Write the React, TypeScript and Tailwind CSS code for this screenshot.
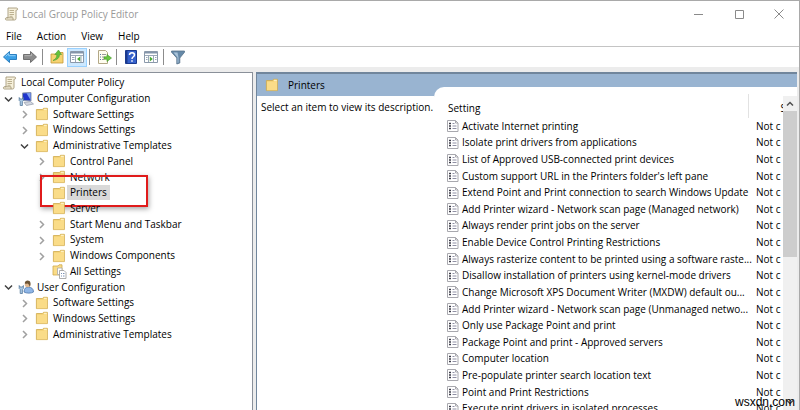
import { useState } from 'react';
import type { ReactNode } from 'react';

interface TreeNode {
  label: string;
  depth: 0 | 1 | 2 | 3;
  icon: ReactNode;
  state?: 'open' | 'closed';
}

function Folder() {
  return (
    <svg className="h-4 w-4 shrink-0" viewBox="0 0 16 16">
      <path d="M2.400 3.500h6.100l1-1.200h3.900v11.300h-11z" fill="#f5d478" stroke="#cfa94c" strokeWidth="0.800" />
      <path d="M3 5h6.500l1-1.300H13v9.500H3z" fill="#fadc88" />
      <path d="M10 2.800h2.800v1H10z" fill="#fff6d4" />
    </svg>
  );
}

function Scroll() {
  return (
    <svg className="h-4 w-4 shrink-0" viewBox="0 0 16 16">
      <path d="M4 2h8.500c1.500 0 1.500 2.200 0 2.200H12v8c0 1.300-.6 1.800-1.500 1.800H2.500c-1.500 0-1.500-2.200 0-2.200H4z" fill="#f7f1dc" stroke="#a59a7c" strokeWidth="0.900" />
      <path d="M2.500 11.800h6.500v2.200" fill="none" stroke="#a59a7c" strokeWidth="0.900" />
      <path d="M5.500 4.500h4.500M5.500 6.500h4.500M5.500 8.500h4.500M5.500 10.300h3" stroke="#b4a988" strokeWidth="0.900" />
    </svg>
  );
}

function ComputerIcon() {
  return (
    <svg className="h-4 w-4 shrink-0" viewBox="0 0 16 16">
      <path d="M4.500 2 13 1.500V10l-8.500-.5z" fill="#1f35cc" stroke="#8c98ac" strokeWidth="1" />
      <path d="m8.500 2.300 4-.3v7z" fill="#7fa0f0" />
      <path d="M6 11.500 12.500 10.500l3 2.500-7 1.500z" fill="#d3d7e0" stroke="#8f98a8" strokeWidth="0.700" />
      <path d="M1.200 6.500v3l1 1v4h2.200v-4l1-1v-3l-1 1.500H2.200z" fill="#a9c8e4" stroke="#55799c" strokeWidth="0.800" />
    </svg>
  );
}

function UserIcon() {
  return (
    <svg className="h-4 w-4 shrink-0" viewBox="0 0 16 16">
      <path d="M6 13c0-3.500 1.500-4.800 4.500-4.800s5 1.500 5 4.800c-2 1.500-7.500 1.500-9.500 0z" fill="#8fb6e6" stroke="#4f78ac" strokeWidth="0.800" />
      <circle cx="9.500" cy="5.500" r="2.700" fill="#e0b890" />
      <path d="M6.800 4.500C6.500 1 12 .5 12.500 4c.2 1.800-.2 3.200-.8 4-.4-1.800-1-3-2.200-3.500-1 .5-2 .4-2.700 0z" fill="#6d5434" />
      <path d="M1.200 6.500v3l1 1v4h2.200v-4l1-1v-3l-1 1.500H2.200z" fill="#a9c8e4" stroke="#55799c" strokeWidth="0.800" />
    </svg>
  );
}

function AllSettingsIcon() {
  return (
    <svg className="h-4 w-4 shrink-0" viewBox="0 0 16 16">
      <path d="M2 3h5l1-1.200h3V12H2z" fill="#fadc88" stroke="#cfa94c" strokeWidth="0.800" />
      <path d="M6.500 5h4.500v6.500H6.500z" fill="#fff" stroke="#a8a8a8" strokeWidth="0.800" />
      <path d="M8.500 7.500h4.500l2 2v6H8.500z" fill="#fff" stroke="#989898" strokeWidth="0.800" />
      <path d="M10 10.500h1M12 10.500h1.500M10 13h1M12 13h1.500" stroke="#6c84ac" strokeWidth="0.900" />
    </svg>
  );
}

function PolicyIcon() {
  return (
    <svg className="h-3.5 w-3 shrink-0" viewBox="0 0 12 14">
      <path d="M.5 1.500h8l2.500 2.500v8.500H.5z" fill="#fff" stroke="#a8a8ae" />
      <path d="M8.500 1.500V4H11" fill="none" stroke="#a8a8ae" />
      <path d="M2 4.500h2M2 7h2M2 9.500h2" stroke="#3c3c48" strokeWidth="1.400" />
      <path d="M5.500 4.500h2M5.500 7h4M5.500 9.500h4" stroke="#9090a4" />
    </svg>
  );
}

function Chevron({ open }: { open: boolean }) {
  return (
    <svg className="h-4 w-4" viewBox="0 0 16 16" fill="none" strokeWidth="1.500">
      {open ? (
        <path d="m5 6.500 3.500 3.500L12 6.500" stroke="#404040" />
      ) : (
        <path d="m7 5 3.500 3.500L7 12" stroke="#a0a0a0" />
      )}
    </svg>
  );
}

function Arrow({ back }: { back?: boolean }) {
  return back ? (
    <svg className="h-4 w-4" viewBox="0 0 16 16">
      <path d="M1.500 8 7.500 2.500v3h7v5h-7v3z" fill="#3ba0e6" stroke="#2b7fc0" />
      <path d="M3.500 7.500 6.700 4.500v2.200h6.800" fill="none" stroke="#8fd0fa" />
    </svg>
  ) : (
    <svg className="h-4 w-4" viewBox="0 0 16 16">
      <path d="M14.500 8 8.500 2.500v3h-7v5h7v3z" fill="#8c8c8c" stroke="#707070" />
      <path d="M2.500 6.700h7V4.500" fill="none" stroke="#b4b4b4" />
    </svg>
  );
}

function UpFolder() {
  return (
    <svg className="h-4 w-4" viewBox="0 0 16 16">
      <path d="M2 5h5.500l1-1.500H14V14H2z" fill="#f6d372" stroke="#c59a35" strokeWidth="0.800" />
      <path d="M4 11.500C7 10 8 8 7.800 5.500H5.800L9.500 1l3 4.500h-2c0 3.500-2.500 5.500-6.500 6z" fill="#65c23a" stroke="#4b9a30" strokeWidth="0.600" />
    </svg>
  );
}

function PaneIcon({ flip }: { flip?: boolean }) {
  return (
    <svg className="h-4 w-4" viewBox="0 0 16 16">
      <path d="M1.500 2.500h13v11h-13z" fill="#fff" stroke="#8b99aa" />
      <path d="M2 3h12v1.500H2z" fill="#8394aa" />
      <path d="M2 6.500h12" stroke="#9aa8b8" />
      {flip ? (
        <>
          <path d="M5.500 7v6M10.500 7v6" stroke="#9aa8b8" />
          <path d="M12 8.500h1.500M12 10.500h1.500M3 8.500h1.500M3 10.500h1.500" stroke="#9aa8b8" />
          <path d="m6.800 7.500 3 2.500-3 2.500z" fill="#4bab34" />
        </>
      ) : (
        <>
          <path d="M6.500 7v6M12 7v6" stroke="#9aa8b8" />
          <path d="M3 8.500h2.500M3 10.500h2.500" stroke="#9aa8b8" />
          <path d="M11.200 7.500 8 10l3.200 2.500z" fill="#4bab34" />
        </>
      )}
    </svg>
  );
}

function ExportIcon() {
  return (
    <svg className="h-4 w-4" viewBox="0 0 16 16">
      <path d="M2.500 1.500h7l2 2v11h-9z" fill="#fffdf0" stroke="#b3a886" />
      <path d="M4 5.500h1M4 8h1M4 10.500h1" stroke="#5878a8" />
      <path d="M6 5.500h4M6 8h2M6 10.500h2" stroke="#9a9a9a" />
      <path d="M8 7.800h3V5.500L15.500 9 11 12.500v-2.300H8z" fill="#69c741" stroke="#3f9426" strokeWidth="0.600" />
    </svg>
  );
}

function HelpIcon() {
  return (
    <svg className="h-4 w-4" viewBox="0 0 16 16">
      <path d="M2.500 1.500h11v13h-11z" fill="#3561cc" stroke="#1b3a8e" />
      <path d="M3 2h1.500v12H3z" fill="#1b3a8e" />
      <path d="M6.500 6c0-3 5-3 5 0 0 1.800-2.500 1.800-2.500 4M9 11.300v1.500" fill="none" stroke="#fff" strokeWidth="1.500" />
    </svg>
  );
}

function FilterIcon() {
  return (
    <svg className="h-4 w-4" viewBox="0 0 16 16">
      <path d="M1.500 2h13v1.200L9.800 9v5l-3 1V9L1.500 3.200z" fill="#6689a8" stroke="#58738c" strokeWidth="0.800" />
      <path d="M3.500 3.500h4l1 5v5l-1 .5V8.500z" fill="#a9c4da" />
    </svg>
  );
}

const tree: TreeNode[] = [
  { label: 'Local Computer Policy', depth: 0, icon: <Scroll /> },
  { label: 'Computer Configuration', depth: 1, icon: <ComputerIcon />, state: 'open' },
  { label: 'Software Settings', depth: 2, icon: <Folder />, state: 'closed' },
  { label: 'Windows Settings', depth: 2, icon: <Folder />, state: 'closed' },
  { label: 'Administrative Templates', depth: 2, icon: <Folder />, state: 'open' },
  { label: 'Control Panel', depth: 3, icon: <Folder />, state: 'closed' },
  { label: 'Network', depth: 3, icon: <Folder />, state: 'closed' },
  { label: 'Printers', depth: 3, icon: <Folder /> },
  { label: 'Server', depth: 3, icon: <Folder /> },
  { label: 'Start Menu and Taskbar', depth: 3, icon: <Folder />, state: 'closed' },
  { label: 'System', depth: 3, icon: <Folder />, state: 'closed' },
  { label: 'Windows Components', depth: 3, icon: <Folder />, state: 'closed' },
  { label: 'All Settings', depth: 3, icon: <AllSettingsIcon /> },
  { label: 'User Configuration', depth: 1, icon: <UserIcon />, state: 'open' },
  { label: 'Software Settings', depth: 2, icon: <Folder />, state: 'closed' },
  { label: 'Windows Settings', depth: 2, icon: <Folder />, state: 'closed' },
  { label: 'Administrative Templates', depth: 2, icon: <Folder />, state: 'closed' },
];

const indent = { 0: 'pl-0', 1: 'pl-0', 2: 'pl-4', 3: 'pl-[33px]' };

const settings = [
  'Activate Internet printing',
  'Isolate print drivers from applications',
  'List of Approved USB-connected print devices',
  "Custom support URL in the Printers folder's left pane",
  'Extend Point and Print connection to search Windows Update',
  'Add Printer wizard - Network scan page (Managed network)',
  'Always render print jobs on the server',
  'Enable Device Control Printing Restrictions',
  'Always rasterize content to be printed using a software raste...',
  'Disallow installation of printers using kernel-mode drivers',
  'Change Microsoft XPS Document Writer (MXDW) default ou...',
  'Add Printer wizard - Network scan page (Unmanaged netwo...',
  'Only use Package Point and print',
  'Package Point and print - Approved servers',
  'Computer location',
  'Pre-populate printer search location text',
  'Point and Print Restrictions',
  'Execute print drivers in isolated processes',
];

function ToolButton({ label, active, children }: { label: string; active?: boolean; children: ReactNode }) {
  return (
    <button
      type="button"
      aria-label={label}
      className={`flex h-[19px] w-5 items-center justify-center ${active ? 'border border-[#99d1ff] bg-[#cce8ff]' : ''}`}
    >
      {children}
    </button>
  );
}

function Separator() {
  return <div className="mr-1 ml-0.5 h-4 w-px bg-[#8c8c8c]" />;
}

function TitleBar() {
  return (
    <header className="flex h-[26px] items-center pl-1 text-[#999]">
      <Scroll />
      <h1 className="ml-0.5 flex-1">Local Group Policy Editor</h1>
      <button type="button" aria-label="Minimize" className="flex w-10 justify-center">
        <svg className="h-2.5 w-2.5" viewBox="0 0 10 10" stroke="#8a8a8a">
          <path d="M0 5.500h9" />
        </svg>
      </button>
      <button type="button" aria-label="Maximize" className="flex w-10 justify-center">
        <svg className="h-2.5 w-2.5" viewBox="0 0 10 10" stroke="#8a8a8a" fill="none">
          <path d="M1.500 1.500h8v8h-8z" />
        </svg>
      </button>
      <button type="button" aria-label="Close" className="flex w-10 justify-center">
        <svg className="h-2.5 w-2.5" viewBox="0 0 10 10" stroke="#8a8a8a">
          <path d="m.5.5 9 9M9.500.5l-9 9" />
        </svg>
      </button>
    </header>
  );
}

function PolicyTree() {
  const [selected, setSelected] = useState(7);

  return (
    <nav className="w-[253px] shrink-0 border-t border-r border-[#8a9099] bg-white pt-0.5">
      <ul className="flex h-[267px] flex-col">
        {tree.map((node, i) => (
          <li key={i} className={`relative flex min-h-0 flex-1 items-center ${indent[node.depth]}`}>
            {node.depth > 0 && (
              <span className="w-4 shrink-0">{node.state && <Chevron open={node.state === 'open'} />}</span>
            )}
            <button type="button" onClick={() => setSelected(i)} className="ml-0.5 flex items-center">
              {node.icon}
              <span className={`px-[3px] leading-[15px] ${i === selected ? 'bg-[#d9d9d9]' : ''}`}>{node.label}</span>
            </button>
            {node.label === 'Printers' && (
              <div className="pointer-events-none absolute -top-2.5 left-10 h-8 w-[108px] border-2 border-[#e01b1b] shadow-[1px_2px_5px_rgba(0,0,0,0.35)]" />
            )}
          </li>
        ))}
      </ul>
    </nav>
  );
}

function SettingsTable() {
  return (
    <table className="h-[323px] w-full table-fixed">
      <thead>
        <tr className="h-6">
          <th className="p-0 pt-1 pl-3.5 text-left font-normal">Setting</th>
          <th className="w-[35px] overflow-hidden border-l border-[#e2e2e2] p-0 pt-1 pl-8 text-left font-normal">S</th>
        </tr>
      </thead>
      <tbody>
        {settings.map((name) => (
          <tr key={name}>
            <td className="p-0 pl-[13px]">
              <div className="flex items-center gap-[3px] leading-[15px] whitespace-nowrap">
                <PolicyIcon />
                {name}
              </div>
            </td>
            <td className="overflow-hidden p-0 pl-2 leading-[15px] whitespace-nowrap">Not c</td>
          </tr>
        ))}
      </tbody>
    </table>
  );
}

function ScrollBar() {
  return (
    <div className="mt-[9px] flex w-3.5 shrink-0 flex-col bg-[#f0f0f0]">
      <button type="button" aria-label="Scroll up" className="flex h-[15px] items-center justify-center">
        <svg className="h-2 w-2" viewBox="0 0 8 8" fill="none" stroke="#505050" strokeWidth="1.500">
          <path d="m1 5.500 3-3 3 3" />
        </svg>
      </button>
      <div className="h-[146px] bg-[#cdcdcd]" />
      <div className="flex-1" />
      <button type="button" aria-label="Scroll down" className="flex h-4 items-center justify-center">
        <svg className="h-2 w-2" viewBox="0 0 8 8" fill="none" stroke="#505050" strokeWidth="1.500">
          <path d="m1 2.500 3 3 3-3" />
        </svg>
      </button>
    </div>
  );
}

export default function App() {
  return (
    <div className="relative flex h-screen flex-col overflow-hidden border-t border-r border-[#a9a9a9] bg-white font-['Open_Sans',sans-serif] text-[10px] text-black">
      <TitleBar />
      <div className="flex h-5 items-center gap-[15px] border-b border-[#c4c4c4] pl-1.5">
        <button type="button">File</button>
        <button type="button">Action</button>
        <button type="button">View</button>
        <button type="button">Help</button>
      </div>
      <div className="flex h-5 items-center">
        <ToolButton label="Back"><Arrow back /></ToolButton>
        <ToolButton label="Forward"><Arrow /></ToolButton>
        <Separator />
        <ToolButton label="Up one level"><UpFolder /></ToolButton>
        <ToolButton label="Show or hide console tree" active><PaneIcon /></ToolButton>
        <Separator />
        <ToolButton label="Export list"><ExportIcon /></ToolButton>
        <Separator />
        <ToolButton label="Help"><HelpIcon /></ToolButton>
        <ToolButton label="Show or hide action pane"><PaneIcon flip /></ToolButton>
        <Separator />
        <ToolButton label="Filter"><FilterIcon /></ToolButton>
      </div>

      <div className="flex min-h-0 flex-1 gap-[3px] bg-[#ececec] pt-[5px] pr-0.5">
        <PolicyTree />
        <main className="flex min-w-0 flex-1 border-t-2 border-l border-[#71869c] bg-[#99b4d1]">
          <section className="flex w-[177px] shrink-0 flex-col">
            <h2 className="flex h-[22px] items-center gap-2 pl-[7px]">
              <Folder />
              Printers
            </h2>
            <p className="flex-1 bg-white pt-1 pl-1 whitespace-nowrap">Select an item to view its description.</p>
          </section>
          <section className="mt-[13px] flex min-w-0 flex-1 overflow-hidden rounded-tl-[10px] bg-white">
            <div className="min-w-0 flex-1 overflow-hidden pt-[7px]">
              <SettingsTable />
            </div>
            <ScrollBar />
          </section>
        </main>
      </div>

      <span className="absolute right-1 bottom-0 font-['Liberation_Sans',sans-serif] text-xs text-black">wsxdn.com</span>
    </div>
  );
}
